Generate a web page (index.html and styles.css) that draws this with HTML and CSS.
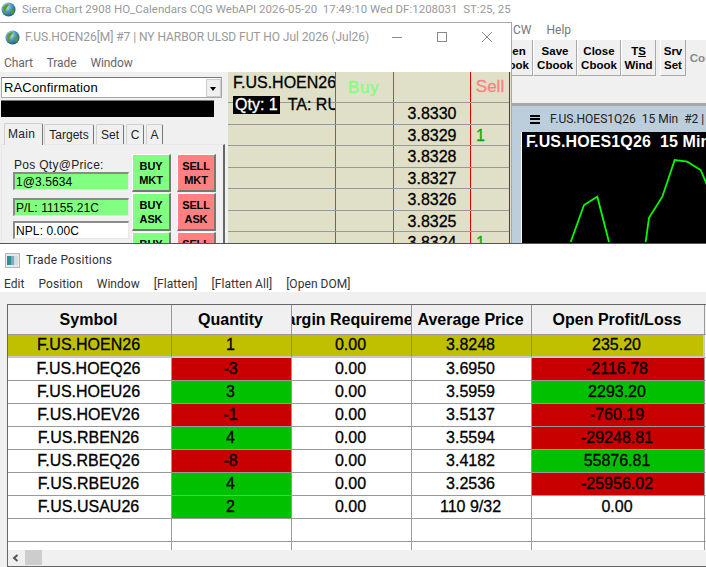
FILE: index.html
```html
<!DOCTYPE html>
<html lang="en">
<head>
<meta charset="utf-8">
<title>Sierra Chart</title>
<link rel="stylesheet" href="styles.css">
</head>
<body>
<svg class="defs" width="0" height="0"><defs>
  <radialGradient id="globe" cx="35%" cy="30%" r="75%"><stop offset="0" stop-color="#d4ecf6"/><stop offset=".5" stop-color="#4d9bc0"/><stop offset="1" stop-color="#1d5a7a"/></radialGradient>
</defs></svg>
<div class="desktop">
  <header class="app-title">
    <svg class="globe app-globe" viewBox="0 0 16 16"><circle cx="8" cy="8" r="7.5" fill="url(#globe)"/><path d="M2 6q2-4 6-4 1 2-1 3-1 2-2 3 0 3 1 5-3-1-4-7zM10 8q3-1 4 1 0 3-3 4-1-2-1-5z" fill="#5b9a2f"/></svg>
    <span class="app-title-text">Sierra Chart 2908 HO_Calendars CQG WebAPI 2026-05-20&nbsp; 17:49:10 Wed DF:1208031&nbsp; ST:25, 25</span>
  </header>
  <nav class="app-menu"><span>CW</span><span>Help</span></nav>
  <div class="toolbar">
    <div class="tool tool-open">Open<br>Cbook</div>
    <div class="tool tool-save">Save<br>Cbook</div>
    <div class="tool tool-close">Close<br>Cbook</div>
    <div class="tool tool-ts">T<u>S</u><br>Wind</div>
    <div class="tool tool-srv">Srv<br>Set</div>
    <div class="tool tool-con">Con</div>
  </div>

  <section class="chart-window">
    <div class="chart-title"><span class="burger"></span><span>F.US.HOES1Q26&nbsp; 15 Min&nbsp; #2 | NY HARBOR</span></div>
    <div class="chart-body">
      <div class="chart-label">F.US.HOES1Q26&nbsp; 15 Min</div>
      <svg class="chart-line" viewBox="0 0 185 112"><polyline points="48.7,110 62,73 75.3,64.700 87,110" /><polyline points="123.700,110 127,85.700 140.300,64.700 152.700,28 165.300,29.700 178.700,38 185,53"/></svg>
    </div>
  </section>

  <section class="dom-window">
    <div class="dom-title">
      <svg class="globe dom-globe" viewBox="0 0 16 16"><circle cx="8" cy="8" r="7.500" fill="url(#globe)"/><path d="M2 6q2-4 6-4 1 2-1 3-1 2-2 3 0 3 1 5-3-1-4-7zM10 8q3-1 4 1 0 3-3 4-1-2-1-5z" fill="#5b9a2f"/></svg>
      <span class="dom-title-text">F.US.HOEN26[M] #7 | NY HARBOR ULSD FUT HO Jul 2026 (Jul26)</span>
      <div class="win-controls">
        <svg viewBox="0 0 10 10"><path d="M0 5.500h10" /></svg>
        <svg viewBox="0 0 10 10"><rect x=".5" y=".5" width="9" height="9"/></svg>
        <svg viewBox="0 0 10 10"><path d="M0 0l10 10M10 0L0 10"/></svg>
      </div>
    </div>
    <nav class="dom-menu"><span>Chart</span><span>Trade</span><span>Window</span></nav>
    <div class="dom-content">
      <aside class="panel">
        <div class="combo"><span>RAConfirmation</span><b class="combo-btn"></b></div>
        <div class="black-bar"></div>
        <div class="tabs">
          <span class="tab tab-on">Main</span><span class="tab tab-targets">Targets</span><span class="tab tab-set">Set</span><span class="tab tab-c">C</span><span class="tab tab-a">A</span>
        </div>
        <div class="tab-page">
          <div class="fields">
            <label>Pos Qty@Price:</label>
            <div class="field green field-first">1@3.5634</div>
            <div class="field green">P/L: 11155.21C</div>
            <div class="field">NPL: 0.00C</div>
          </div>
          <div class="orders">
            <div class="order buy">BUY<br>MKT</div><div class="order sell">SELL<br>MKT</div>
            <div class="order buy">BUY<br>ASK</div><div class="order sell">SELL<br>ASK</div>
            <div class="order buy">BUY<br>BID</div><div class="order sell">SELL<br>BID</div>
          </div>
        </div>
      </aside>
      <div class="dom-grid">
        <div class="dom-cols">
          <div class="dom-row dom-head"><span></span><span class="c-buy">Buy</span><span></span><span class="c-sell">Sell</span></div>
          <div class="dom-row"><span></span><span></span><span class="price">3.8330</span><span></span></div>
          <div class="dom-row"><span></span><span></span><span class="price">3.8329</span><span class="fill">1</span></div>
          <div class="dom-row"><span></span><span></span><span class="price">3.8328</span><span></span></div>
          <div class="dom-row"><span></span><span></span><span class="price">3.8327</span><span></span></div>
          <div class="dom-row"><span></span><span></span><span class="price">3.8326</span><span></span></div>
          <div class="dom-row"><span></span><span></span><span class="price">3.8325</span><span></span></div>
          <div class="dom-row"><span></span><span></span><span class="price">3.8324</span><span class="fill">1</span></div>
        </div>
        <div class="dom-sym"><div class="sym-name">F.US.HOEN26</div><div class="sym-qty"><span class="qty">Qty: 1</span>TA: RUNNING</div></div>
      </div>
    </div>
  </section>

  <section class="pos-window">
    <div class="pos-title">
      <svg class="pos-icon" viewBox="0 0 15 15"><rect x=".5" y=".5" width="14" height="14" fill="#e8e8e8" stroke="#b5b5b5"/><rect x="2" y="3" width="4" height="9" fill="#2f8f8f"/><rect x="6" y="3" width="3" height="9" fill="#7da7c4"/><rect x="9" y="3" width="4" height="9" fill="#d2dde2"/></svg>
      <span>Trade Positions</span>
    </div>
    <nav class="pos-menu"><span>Edit</span><span>Position</span><span>Window</span><span>[Flatten]</span><span>[Flatten All]</span><span>[Open DOM]</span></nav>
    <div class="pos-body">
      <div class="table-box">
        <table class="pos-table">
          <colgroup><col class="w-sym"><col class="w-num"><col class="w-num"><col class="w-num"><col class="w-pl"><col class="w-rest"></colgroup>
          <thead><tr><th><div>Symbol</div></th><th><div>Quantity</div></th><th><div>Margin Requirement</div></th><th><div>Average Price</div></th><th><div>Open Profit/Loss</div></th><th class="last-head"><div>Closed</div></th></tr></thead>
          <tbody>
            <tr class="selected"><td><div>F.US.HOEN26</div></td><td><div>1</div></td><td><div>0.00</div></td><td><div>3.8248</div></td><td><div>235.20</div></td><td></td></tr>
            <tr><td><div>F.US.HOEQ26</div></td><td class="neg"><div>-3</div></td><td><div>0.00</div></td><td><div>3.6950</div></td><td class="neg"><div>-2116.78</div></td><td></td></tr>
            <tr><td><div>F.US.HOEU26</div></td><td class="pos"><div>3</div></td><td><div>0.00</div></td><td><div>3.5959</div></td><td class="pos"><div>2293.20</div></td><td></td></tr>
            <tr><td><div>F.US.HOEV26</div></td><td class="neg"><div>-1</div></td><td><div>0.00</div></td><td><div>3.5137</div></td><td class="neg"><div>-760.19</div></td><td></td></tr>
            <tr><td><div>F.US.RBEN26</div></td><td class="pos"><div>4</div></td><td><div>0.00</div></td><td><div>3.5594</div></td><td class="neg"><div>-29248.81</div></td><td></td></tr>
            <tr><td><div>F.US.RBEQ26</div></td><td class="neg"><div>-8</div></td><td><div>0.00</div></td><td><div>3.4182</div></td><td class="pos"><div>55876.81</div></td><td></td></tr>
            <tr><td><div>F.US.RBEU26</div></td><td class="pos"><div>4</div></td><td><div>0.00</div></td><td><div>3.2536</div></td><td class="neg"><div>-25956.02</div></td><td></td></tr>
            <tr><td><div>F.US.USAU26</div></td><td class="pos"><div>2</div></td><td><div>0.00</div></td><td><div>110 9/32</div></td><td><div>0.00</div></td><td></td></tr>
            <tr><td></td><td></td><td></td><td></td><td></td><td></td></tr>
            <tr><td></td><td></td><td></td><td></td><td></td><td></td></tr>
          </tbody>
        </table>
        <div class="hscroll"><svg class="arrow" viewBox="0 0 7 8"><path d="M5.500 1L2 4l3.500 3" /></svg><span class="thumb"></span></div>
      </div>
    </div>
  </section>
</div>
</body>
</html>
```

FILE: styles.css
```css
* { box-sizing: border-box; }
html, body { margin: 0; padding: 0; }
body { width: 706px; height: 567px; overflow: hidden; background: #f0f0f0; font-family: "Liberation Sans", Arial, sans-serif; color: #000; }
.defs { position: absolute; }
.desktop { position: relative; width: 706px; height: 567px; overflow: hidden; background: #f0f0f0; }

/* main frame */
.app-title { height: 22px; background: #fff; display: flex; align-items: center; padding: 0 0 4px 1px; gap: 6px; }
.globe { display: block; flex: none; width: 15px; height: 15px; }
.app-title-text { font: 11.5px Roboto, sans-serif; color: #999; white-space: nowrap; }
.dom-title-text { font: 12px Roboto, sans-serif; color: #999; white-space: nowrap; letter-spacing: -.05px; }
.app-menu { position: absolute; left: 512px; top: 22px; width: 194px; height: 18px; background: #fff; display: flex; gap: 15px; padding: 0 0 3px 1px; font: 12px Roboto, sans-serif; color: #777; align-items: center; }
.toolbar { position: absolute; left: 489px; top: 40px; display: flex; height: 36px; }
.tool { width: 44px; height: 36px; background: #f0f0f0; border-right: 1px solid #a8a8a8; border-bottom: 1px solid #a8a8a8; border-left: 1px solid #fff; font: 700 11.5px/14px "Liberation Sans", sans-serif; text-align: center; padding-top: 4px; }
.tool-ts { width: 35px; }
.tool-srv { width: 26px; margin-left: 4px; }
.tool-con { width: 30px; color: #8a8a8a; border: 0; padding-top: 11px; }

.chart-window { position: absolute; left: 512px; top: 103px; width: 194px; height: 141px; background: #bccddc; border-top: 3px solid #a8a8a8; }
.chart-title { height: 26px; display: flex; align-items: center; gap: 10px; padding-left: 18px; font: 12px Roboto, sans-serif; white-space: nowrap; color: #222; }
.burger { flex: none; width: 10px; height: 9px; border-top: 2px solid #000; border-bottom: 2px solid #000; position: relative; }
.burger::after { content: ""; position: absolute; left: 0; right: 0; top: 1.500px; height: 2px; background: #000; }
.chart-body { position: relative; margin-left: 9px; height: 112px; background: #000; overflow: hidden; border-left: 1px solid #fff; }
.chart-label { padding: 0 0 0 4px; font: 700 16px/20px "Liberation Sans", sans-serif; color: #fff; white-space: nowrap; letter-spacing: .1px; }
.chart-line { position: absolute; left: 0; top: 0; width: 185px; height: 112px; fill: none; stroke: #00ff00; stroke-width: 1.800; }

/* DOM window */
.dom-window { position: absolute; left: 0; top: 22px; width: 512px; height: 222px; background: #fff; border-top: 1px solid #a8a8a8; border-right: 1px solid #a8a8a8; display: flex; flex-direction: column; overflow: hidden; }
.dom-title { height: 28px; flex: none; display: flex; align-items: center; padding-left: 5px; gap: 5px; position: relative; }
.win-controls { position: absolute; left: 392px; top: 9px; display: flex; gap: 35px; }
.win-controls svg { width: 10px; height: 10px; fill: none; stroke: #8a8a8a; stroke-width: 1; }
.dom-menu { height: 21px; flex: none; display: flex; gap: 14px; align-items: center; padding: 2px 0 0 4px; font: 12px Roboto, sans-serif; letter-spacing: -.1px; color: #666; }
.dom-content { flex: 1; display: flex; min-height: 0; }

.panel { width: 228px; flex: none; background: #f0f0f0; padding: 5px 0 0 1px; }
.combo { width: 221px; height: 21px; background: #fff; border: 1px solid #a8a8a8; border-top-color: #777; display: flex; align-items: center; justify-content: space-between; padding-left: 2px; font: 13px "Liberation Sans", sans-serif; letter-spacing: .15px; }
.combo-btn { width: 15px; height: 18px; background: #f0f0f0; border: 1px solid #ccc; position: relative; }
.combo-btn::after { content: ""; position: absolute; left: 3px; top: 7px; border: 3.500px solid transparent; border-top: 4px solid #000; border-bottom: 0; }
.black-bar { width: 213px; height: 17px; margin-top: 2px; background: #000; border-top: 1px solid #777; }
.tabs { display: flex; gap: 2px; padding: 4px 0 0 3px; height: 27px; align-items: flex-end; }
.tab { height: 20px; background: #f0f0f0; border: 1px solid #d0d0d0; border-right: 1px solid #777; border-bottom: 0; border-radius: 2px 2px 0 0; font: 12px/21px "Liberation Sans", sans-serif; color: #222; text-align: center; }
.tab-on { width: 39px; height: 22px; padding-right: 4px; position: relative; z-index: 1; margin-bottom: -1px; margin-right: -1px; letter-spacing: .3px; }
.tab-targets { width: 50px; }
.tab-set { width: 28px; }
.tab-c { width: 18px; }
.tab-a { width: 17px; }
.tab-page { width: 224px; height: 100px; border: 1px solid #e8e8e8; border-right: 2px solid #666; padding: 9px 0 0 11px; display: flex; gap: 2px; }
.fields { width: 117px; flex: none; display: flex; flex-direction: column; }
.fields label { font: 12px/13px "Liberation Sans", sans-serif; letter-spacing: .3px; color: #222; padding: 5px 0 0 1px; }
.field { width: 116px; height: 18px; margin-bottom: 5px; background: #fff; border: 2px solid #8a8a8a; border-right: 1px solid #e8e8e8; border-bottom: 1px solid #e8e8e8; font: 12px/16px "Liberation Sans", sans-serif; letter-spacing: .1px; padding-left: 1px; }
.field-first { margin-bottom: 8px; }
.green { background: #80ff80; }
.orders { display: grid; grid-template-columns: 39px 39px; column-gap: 6px; row-gap: 1px; grid-auto-rows: 38px; }
.order { border: 1px solid #fff; border-right: 2px solid #777; border-bottom: 2px solid #777; font: 700 11px/14px "Liberation Sans", sans-serif; letter-spacing: -.1px; text-align: center; padding-top: 4px; }
.buy { background: #80ff80; }
.sell { background: #ff8080; }

.dom-grid { flex: 1; position: relative; background: #e0e0c8; }
.dom-sym { position: absolute; left: 0; top: 0; width: 107px; height: 48px; overflow: hidden; z-index: 1; padding-left: 5px; white-space: nowrap; font: 16px/20px "Liberation Sans", sans-serif; -webkit-text-stroke: .3px #000; }
.sym-name { height: 23px; padding-top: 1px; }
.sym-qty { display: flex; align-items: center; gap: 8px; }
.qty { display: block; height: 18px; line-height: 18px; background: #000; color: #fff; -webkit-text-stroke: .3px #fff; padding: 0 2px; }
.dom-cols { position: absolute; left: 0; top: 0; right: 1px; border-right: 1px solid #e00000; }
.dom-row { display: grid; grid-template-columns: 108px 58px 77px 1fr; height: 21.500px; border-bottom: 1px solid #999; overflow: hidden; }
.dom-row span { text-align: center; font: 16px/22px "Liberation Sans", sans-serif; -webkit-text-stroke: .3px #000; }
.dom-row span:nth-child(1) { border-right: 1px solid #00b000; }
.dom-row span:nth-child(2) { border-right: 1px solid #00b000; }
.dom-row span:nth-child(3) { border-right: 1px solid #e00000; }
.dom-head { height: 31px; }
.dom-row .c-buy { color: #80ff80; -webkit-text-stroke: .3px #80ff80; font-size: 17px; letter-spacing: .6px; line-height: 31px; text-align: left; padding-left: 12px; }
.dom-row .c-sell { color: #ff8080; -webkit-text-stroke: .3px #ff8080; font-size: 17px; line-height: 29px; }
.dom-row .fill { color: #00b000; -webkit-text-stroke: .3px #00b000; text-align: left; padding-left: 5px; }

/* positions window */
.pos-window { position: absolute; left: 0; top: 243px; width: 706px; height: 324px; background: #fff; border-top: 1px solid #555; display: flex; flex-direction: column; }
.pos-title { height: 30px; flex: none; display: flex; align-items: center; gap: 6px; padding: 2px 0 0 5px; font: 12px Roboto, sans-serif; letter-spacing: .2px; color: #333; }
.pos-icon { width: 15px; height: 15px; }
.pos-menu { height: 18px; flex: none; display: flex; gap: 14px; align-items: center; padding: 2px 0 0 4px; font: 12px Roboto, sans-serif; letter-spacing: .05px; color: #333; }
.pos-body { flex: 1; min-height: 0; background: #f0f0f0; padding: 12px 0 0 7px; }
.table-box { position: relative; width: 699px; height: 263px; background: #f0f0f0; border: 1px solid #666; border-right: 0; overflow: hidden; }
.pos-table { border-collapse: separate; border-spacing: 0; table-layout: fixed; width: 724px; font: 16px "Liberation Sans", sans-serif; }
.w-sym { width: 164px; }
.w-num { width: 120px; }
.w-pl { width: 173px; }
.w-rest { width: 27px; }
.pos-table th { height: 30px; background: #f0f0f0; font-weight: 700; padding: 0; border-right: 1px solid #999; border-bottom: 1px solid #999; }
.pos-table td { height: 23px; background: #fff; padding: 0; border-right: 1px solid #999; border-bottom: 1px solid #999; -webkit-text-stroke: .3px #000; }
.pos-table th div, .pos-table td div { display: flex; justify-content: center; white-space: nowrap; overflow: hidden; line-height: 21px; padding-right: 2px; }
.pos-table td div { line-height: 20px; padding-bottom: 1px; }
.pos-table .last-head div { justify-content: flex-start; padding-left: 1px; }
.pos-table .neg { background: #c80000; }
.pos-table .pos { background: #00c000; }
.pos-table .selected td { background: #c0c000; border-right-color: #9a9a00; border-bottom: 2px solid #c8c8c8; }
.pos-table .selected td:nth-child(5) { border-right: 2px solid #c8c8c8; }
.pos-table .selected td:nth-child(6) { background: #fff; border-bottom-color: #999; border-bottom-width: 1px; }
.hscroll { position: absolute; left: 0; right: 0; bottom: 0; height: 16px; background: #f0f0f0; }
.arrow { position: absolute; left: 4px; top: 4px; width: 7px; height: 8px; fill: none; stroke: #555; stroke-width: 2; }
.thumb { position: absolute; left: 17px; top: 0; width: 17px; height: 15px; background: #cdcdcd; }
```
